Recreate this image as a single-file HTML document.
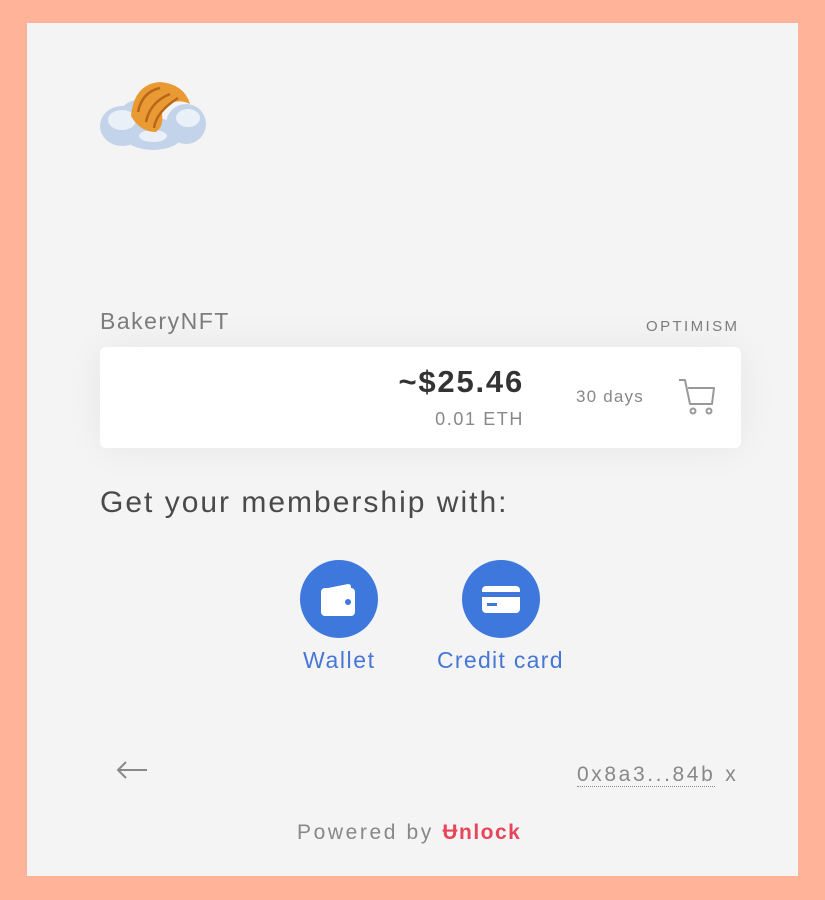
<!DOCTYPE html>
<html><head><meta charset="utf-8"><style>
*{margin:0;padding:0;box-sizing:border-box}
html,body{width:825px;height:900px;background:#ffb499;overflow:hidden;font-family:"Liberation Sans",sans-serif}
.panel{position:absolute;left:27px;top:23px;width:771px;height:853px;background:#f4f4f4}
.abs{position:absolute;white-space:nowrap}
.card{position:absolute;left:100px;top:347px;width:641px;height:101px;background:#fff;border-radius:6px;box-shadow:0 0 40px rgba(0,0,0,0.06)}
.btn{position:absolute;width:78px;height:78px;border-radius:50%;background:#3e78dc}
.lbl{position:absolute;color:#4677d6;font-size:23px;white-space:nowrap}
</style></head><body>
<div class="panel"></div>
<svg class="abs" style="left:98px;top:76px" width="112" height="77" viewBox="0 0 112 77">
 <g fill="#c3d3ea">
  <ellipse cx="24" cy="50" rx="22" ry="20"/>
  <ellipse cx="55" cy="58" rx="30" ry="16"/>
  <ellipse cx="88" cy="48" rx="20" ry="20"/>
  <ellipse cx="40" cy="40" rx="18" ry="16"/>
 </g>
 <g fill="#eaf0f8"><ellipse cx="24" cy="44" rx="14" ry="10"/><ellipse cx="90" cy="42" rx="12" ry="9"/><ellipse cx="55" cy="60" rx="14" ry="6"/></g>
 <path d="M33 40 Q36 8 62 6 Q86 8 92 28 Q84 24 76 26 Q66 28 64 38 Q66 50 58 56 Q42 56 33 40Z" fill="#ea9a32"/>
 <path d="M40 36 Q44 16 62 12 M48 46 Q52 26 72 18 M56 52 Q58 36 80 22" stroke="#b8661a" stroke-width="2.5" fill="none"/>
</svg>
<div class="abs" style="left:100px;top:308px;font-size:23px;color:#7d7d7d;letter-spacing:1.5px">BakeryNFT</div>
<div class="abs" style="left:646px;top:318px;font-size:15px;color:#7d7d7d;letter-spacing:2.4px">OPTIMISM</div>
<div class="card"></div>
<div class="abs" style="left:360px;top:364px;width:164px;text-align:right;font-size:31px;font-weight:bold;color:#333;letter-spacing:1.8px">~$25.46</div>
<div class="abs" style="left:380px;top:409px;width:144px;text-align:right;font-size:18px;color:#888;letter-spacing:1.6px">0.01 ETH</div>
<div class="abs" style="left:576px;top:387px;font-size:17px;color:#888;letter-spacing:1.2px">30 days</div>
<svg class="abs" style="left:677px;top:376px" width="40" height="42" viewBox="0 0 40 42">
 <path d="M2 4 H8 L13 28 H35 L37 12 H11" fill="none" stroke="#999" stroke-width="2" stroke-linejoin="round"/>
 <circle cx="16" cy="35" r="2.5" fill="none" stroke="#999" stroke-width="2"/>
 <circle cx="32" cy="35" r="2.5" fill="none" stroke="#999" stroke-width="2"/>
</svg>
<div class="abs" style="left:100px;top:486px;font-size:30px;color:#4a4a4a;letter-spacing:2px">Get your membership with:</div>
<div class="btn" style="left:300px;top:560px"></div>
<svg class="abs" style="left:300px;top:560px" width="78" height="78" viewBox="0 0 78 78">
 <path d="M23 29 L48 24 Q51 24 51 27 V29Z" fill="#fff"/>
 <rect x="21" y="28" width="34" height="28" rx="4" fill="#fff"/>
 <circle cx="48" cy="42" r="3" fill="#3e78dc"/>
</svg>
<div class="btn" style="left:462px;top:560px"></div>
<svg class="abs" style="left:462px;top:560px" width="78" height="78" viewBox="0 0 78 78">
 <rect x="20" y="26" width="38" height="27" rx="4" fill="#fff"/>
 <rect x="20" y="32" width="38" height="5" fill="#3e78dc"/>
 <rect x="25" y="43" width="10" height="3" fill="#3e78dc"/>
</svg>
<div class="lbl" style="left:303px;top:647px;letter-spacing:1.6px">Wallet</div>
<div class="lbl" style="left:437px;top:647px;letter-spacing:1.3px">Credit card</div>
<svg class="abs" style="left:115px;top:760px" width="34" height="20" viewBox="0 0 34 20">
 <path d="M32 10 H3 M11 2 L3 10 L11 18" fill="none" stroke="#888" stroke-width="2"/>
</svg>
<div class="abs" style="left:577px;top:763px;font-size:21px;color:#888"><span style="border-bottom:1px dotted #888;letter-spacing:2.6px">0x8a3...84b</span> <span style="margin-left:4px">x</span></div>
<div class="abs" style="left:297px;top:821px;font-size:21px;color:#888;letter-spacing:2.6px">Powered by <span style="color:#e8455a;font-weight:bold;letter-spacing:1.5px">Ʉnlock</span></div>
</body></html>
